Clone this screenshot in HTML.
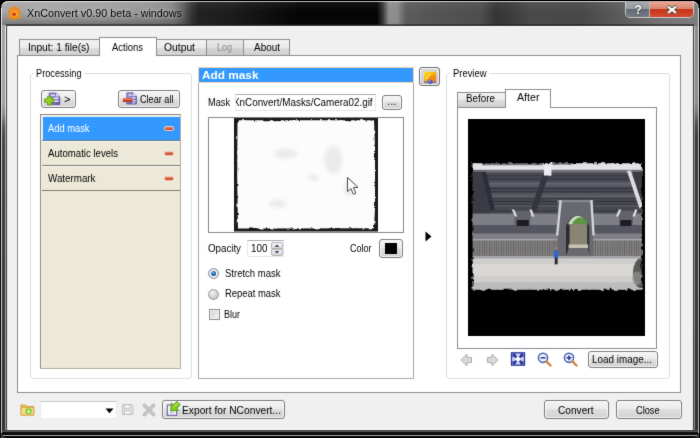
<!DOCTYPE html>
<html><head><meta charset="utf-8"><title>XnConvert v0.90 beta - windows</title>
<style>
html,body{margin:0;padding:0;background:#000;}
body{width:700px;height:438px;position:relative;overflow:hidden;font-family:"Liberation Sans",sans-serif;font-size:10.5px;color:#000;}
.a{position:absolute;box-sizing:border-box;}
.t{position:absolute;white-space:nowrap;line-height:14px;font-size:10.5px;transform-origin:0 50%;color:#000;}
.btn{position:absolute;box-sizing:border-box;border:1px solid #7c7c7c;border-radius:3px;background:linear-gradient(#f4f4f4 0%,#ececec 45%,#dedede 50%,#d2d2d2 100%);box-shadow:inset 0 0 0 1px rgba(255,255,255,.75);}
.tab{position:absolute;box-sizing:border-box;border:1px solid #898c95;border-bottom:none;background:linear-gradient(#f3f3f3 0%,#ebebeb 50%,#dddddd 52%,#d0d0d0 100%);}
.tab.sel{background:#fff;}
.grp{position:absolute;box-sizing:border-box;border:1px solid #d5dfe5;border-radius:3px;}
.li{position:absolute;left:1px;width:138px;height:25px;box-sizing:border-box;border-top:1px solid #fbfaf5;border-bottom:1px solid #7f7d74;background:#ece9d8;}
.minus{position:absolute;left:122px;top:9px;width:10px;height:5px;box-sizing:border-box;border:1px solid #f0c9b8;border-radius:2px;background:linear-gradient(#e8836a,#c8391f);}
#w{position:absolute;left:0;top:0;width:700px;height:438px;overflow:hidden;filter:url(#gsoft);}
</style></head><body><svg width="0" height="0" style="position:absolute"><filter id="gsoft" x="0" y="0" width="100%" height="100%" color-interpolation-filters="sRGB"><feConvolveMatrix order="3" kernelMatrix="1 4 1 4 40 4 1 4 1" divisor="60" edgeMode="duplicate" preserveAlpha="true"/></filter></svg><div id="w">

<!-- ===== window frame ===== -->
<div class="a" id="titlebar" style="left:1px;top:1px;width:698px;height:30px;border-radius:7px 7px 0 0;background:linear-gradient(90deg,#a8a8a8 0px,#a6a6a6 40px,#a0a0a0 100px,#969696 150px,#888 170px,#606060 182px,#383838 190px,#222 198px,#1c1c1c 230px,#0e0e0e 270px,#050505 300px,#050505 376px,#3a3a3a 382px,#8e8e8e 388px,#8c8c8c 396px,#5c5c5c 405px,#555 430px,#4e4e4e 480px,#353535 495px,#3c3c3c 510px,#4a4a4a 530px,#484848 580px,#5c5c5c 620px,#747474 660px,#7e7e7e 699px);"></div>
<div class="a" style="left:1px;top:1px;width:698px;height:24px;border-radius:7px 7px 0 0;background:linear-gradient(rgba(255,255,255,.06) 0,rgba(255,255,255,.0) 10px);border-top:1px solid rgba(255,255,255,.75);"></div>
<div class="a" style="left:2px;top:2px;width:200px;height:23px;background:linear-gradient(rgba(0,0,0,0) 9px,rgba(0,0,0,.10) 15px,rgba(0,0,0,.28) 23px);-webkit-mask-image:linear-gradient(90deg,#000 0,#000 165px,transparent 198px);mask-image:linear-gradient(90deg,#000 0,#000 165px,transparent 198px);"></div>
<!-- left frame -->
<div class="a" style="left:0;top:26px;width:7px;height:412px;background:linear-gradient(#a4a4a4 0px,#a0a0a0 76px,#8a8a8a 88px,#585858 100px,#474747 112px,#424250 126px,#424242 140px,#3c3c3c 300px,#333 400px);"></div>
<div class="a" style="left:0;top:8px;width:1px;height:430px;background:#0a0a0a;"></div>
<div class="a" style="left:1px;top:8px;width:1px;height:425px;background:linear-gradient(#f4f4f4,#d0d0d0 200px,#c4c4c4);"></div>
<div class="a" style="left:5px;top:26px;width:1px;height:405px;background:linear-gradient(#f0f0f0 0,#e8e8e8 80px,#a8a8a8 108px,#999 405px);"></div>
<div class="a" style="left:6px;top:25px;width:1px;height:406px;background:#454545;"></div>
<!-- right frame -->
<div class="a" style="left:693px;top:26px;width:7px;height:412px;background:linear-gradient(#8c8c8c 0px,#8e8e8e 74px,#7a7a7a 86px,#505050 98px,#3e3e3e 110px,#3a3a3a 300px,#333 400px);"></div>
<div class="a" style="left:693px;top:25px;width:1px;height:406px;background:#444;"></div>
<div class="a" style="left:694px;top:26px;width:1px;height:405px;background:linear-gradient(#c4c4c4 0,#bcbcbc 75px,#8c8c8c 105px,#888 405px);"></div>
<div class="a" style="left:698px;top:8px;width:1px;height:425px;background:linear-gradient(#e4e4e4 0,#dcdcdc 95px,#bdbdbd 125px,#b8b8b8);"></div>
<div class="a" style="left:699px;top:8px;width:1px;height:430px;background:#080808;"></div>
<!-- bottom frame -->
<div class="a" style="left:2px;top:430px;width:696px;height:8px;background:linear-gradient(#3a3a3a 0,#555 1.5px,#111 2.5px,#050505 5px,#a8a8a8 5px,#a8a8a8 6px,#060606 6px);border-radius:0 0 5px 5px;"></div>
<!-- title bottom lines -->
<div class="a" style="left:6px;top:24px;width:688px;height:1px;background:rgba(30,30,30,.55);"></div><div class="a" style="left:6px;top:25px;width:688px;height:1px;background:#3a3a3a;"></div>

<!-- client -->
<div class="a" style="left:7px;top:26px;width:686px;height:404px;background:#f0f0f0;border:1px solid #fbfbfb;border-color:#fdfdfd #e4e4e4 #fdfdfd #e4e4e4;"></div>

<!-- title icon -->
<svg class="a" style="left:7px;top:5.5px" width="15" height="14.5" viewBox="0 0 16 16" preserveAspectRatio="none">
 <g fill="#f08a1c"><circle cx="8" cy="9" r="5.6"/><circle cx="2.6" cy="6" r="1.7"/><circle cx="4.6" cy="2.8" r="1.7"/><circle cx="8" cy="1.8" r="1.7"/><circle cx="11.4" cy="2.8" r="1.7"/><circle cx="13.4" cy="6" r="1.7"/><circle cx="3" cy="12.5" r="1.8"/><circle cx="13" cy="12.5" r="1.8"/><circle cx="8" cy="14.3" r="1.7"/></g>
 <circle cx="8" cy="8.6" r="3.6" fill="#f6a531"/><circle cx="7.6" cy="9" r="1.9" fill="#d6301a"/>
</svg>
<span class="t" style="left:26.5px;top:6.26px;transform:scaleX(0.9787);font-size:11px;color:#000;text-shadow:0 0 6px rgba(255,255,255,.55),0 0 3px rgba(255,255,255,.35);">XnConvert v0.90 beta - windows</span>

<!-- caption buttons -->
<div class="a" style="left:625px;top:1px;width:69px;height:17px;border:1px solid #c9c9c9;border-top:none;border-radius:0 0 5px 5px;overflow:hidden;background:#555;">
  <div class="a" style="left:0;top:0;width:24px;height:16px;background:linear-gradient(#a9acb2 0,#979ba2 48%,#646a73 52%,#747b85 100%);border-right:1px solid #b9b9b9;"></div>
  <div class="a" style="left:24px;top:0;width:44px;height:16px;background:linear-gradient(#e6ab9b 0,#d98772 48%,#c5331a 52%,#d44c30 100%);"></div>
</div>
<div class="t" style="left:634.500px;top:2.500px;font-size:12px;font-weight:bold;color:#fff;text-shadow:0 0 2px #222;">?</div>
<svg class="a" style="left:666px;top:4.5px" width="12" height="9.5" viewBox="0 0 14 11"><path d="M2 1.5 L12 9.5 M12 1.5 L2 9.5" stroke="#444" stroke-width="4.2" stroke-linecap="butt"/><path d="M2.3 1.8 L11.7 9.2 M11.7 1.8 L2.3 9.2" stroke="#fff" stroke-width="2.6"/></svg>

<!-- ===== tab widget ===== -->
<div class="a" style="left:17px;top:55px;width:664px;height:338px;border:1px solid #898c95;background:#fff;"></div>
<div class="tab" style="left:19px;top:39.400px;width:81px;height:15.600px;"></div>
<div class="tab" style="left:156px;top:39.400px;width:51px;height:15.600px;"></div>
<div class="tab" style="left:206px;top:39.400px;width:38px;height:15.600px;background:linear-gradient(#e9e9e9 0,#dedede 50%,#d2d2d2 52%,#c9c9c9 100%);"></div>
<div class="tab" style="left:243px;top:39.400px;width:47px;height:15.600px;"></div>
<div class="tab sel" style="left:99.400px;top:37px;width:57.200px;height:19px;"></div>
<span class="t" style="left:27.5px;top:39.93px;transform:scaleX(0.9666);">Input: 1 file(s)</span>
<span class="t" style="left:111.5px;top:39.63px;transform:scaleX(0.9002);">Actions</span>
<span class="t" style="left:164px;top:39.93px;transform:scaleX(0.9832);">Output</span>
<span class="t" style="left:216.5px;top:39.93px;transform:scaleX(0.8556);color:#8c8c8c;">Log</span>
<span class="t" style="left:253.5px;top:39.93px;transform:scaleX(0.9471);">About</span>

<!-- ===== Processing group ===== -->
<div class="grp" style="left:29.500px;top:72.500px;width:162.500px;height:306px;"></div>
<div class="a" style="left:34px;top:70px;width:50px;height:8px;background:#fff;"></div>
<span class="t" style="left:36px;top:65.83px;transform:scaleX(0.8758);">Processing</span>
<div class="btn" style="left:41px;top:90px;width:35px;height:18px;"></div>
<svg class="a" style="left:44px;top:92px" width="18" height="14" viewBox="0 0 18 14">
 <defs><linearGradient id="docg" x1="0" y1="0" x2="1" y2="1"><stop offset="0" stop-color="#a9a2dc"/><stop offset="1" stop-color="#5d52a6"/></linearGradient></defs>
 <path d="M5.200 1 h7 l3.600 3.400 v8.200 h-10.600 z" fill="url(#docg)" stroke="#5a4f9c" stroke-width=".8"/>
 <path d="M12.200 1 v3.400 h3.600z" fill="#e4e1f6"/>
 <rect x="9.500" y="5.600" width="5" height="1.500" fill="#f1effb"/><rect x="9.500" y="8.400" width="5" height="1.500" fill="#f1effb"/><rect x="7" y="2.600" width="4" height="1.300" fill="#e6e3f7"/>
 <path d="M3.600 4.300 h3.400 v2.700 h2.900 v3.300 h-2.900 v2.700 h-3.400 v-2.700 h-2.900 v-3.300 h2.900 z" fill="#96d424" stroke="#5e9c14" stroke-width=".9"/>
</svg>
<span class="t" style="left:63.5px;top:91.66px;transform:scaleX(1.0097);font-size:11px;">&gt;</span>
<div class="btn" style="left:118px;top:90px;width:62px;height:18px;"></div>
<svg class="a" style="left:122px;top:92px" width="18" height="14" viewBox="0 0 18 14">
 <path d="M4.800 .8 h6.200 l3.400 3.200 v8 h-9.600 z" fill="url(#docg)" stroke="#5a4f9c" stroke-width=".8"/>
 <path d="M11 .8 v3.200 h3.400z" fill="#e4e1f6"/>
 <rect x="6.500" y="2.400" width="3.600" height="1.300" fill="#e6e3f7"/><rect x="10" y="5.200" width="3.600" height="1.300" fill="#f1effb"/><rect x="10.600" y="8" width="3" height="1.300" fill="#f1effb"/><rect x="10" y="10.300" width="3.600" height="1.100" fill="#d9d5f2"/>
 <rect x=".8" y="6.300" width="9.600" height="3.800" rx=".8" fill="#c7361c"/><rect x="1.200" y="6.500" width="8.800" height="1.300" fill="#ee8f6a"/>
</svg>
<span class="t" style="left:140px;top:91.83px;transform:scaleX(0.8698);">Clear all</span>
<!-- list -->
<div class="a" style="left:40px;top:114px;width:141px;height:255px;border:1px solid #828790;border-color:#8f8a7e #b5b1a4 #b5b1a4 #8f8a7e;background:#ece9d8;box-shadow:inset 1px 1px 0 #f6efe4;">
  <div class="li" style="top:1px;background:#3399ff;border-top-color:#e7f0fa;border-bottom-color:#6a7a8c;box-shadow:inset 1px 0 0 #e7f0fa;"><div class="minus"></div></div>
  <div class="li" style="top:26px;"><div class="minus"></div></div>
  <div class="li" style="top:51px;"><div class="minus"></div></div>
</div>
<span class="t" style="left:47.5px;top:120.93px;transform:scaleX(0.8889);color:#fff;">Add mask</span>
<span class="t" style="left:47.5px;top:146.13px;transform:scaleX(0.9156);">Automatic levels</span>
<span class="t" style="left:47.5px;top:171.23px;transform:scaleX(0.9322);">Watermark</span>

<!-- ===== centre panel ===== -->
<div class="a" style="left:198px;top:82px;width:215.500px;height:297px;border:1px solid #a9a9a9;border-top:none;background:#fff;"></div>
<div class="a" style="left:198px;top:67px;width:215.500px;height:16px;border:1px solid #f3d2b4;background:#3399ff;"></div>
<span class="t" style="left:201.5px;top:67.50px;transform:scaleX(1.0279);font-size:11.5px;font-weight:bold;color:#fff;">Add mask</span>
<span class="t" style="left:208px;top:94.83px;transform:scaleX(0.8767);">Mask</span>
<div class="a" style="left:235px;top:94px;width:141px;height:17px;border:1px solid #e3e9ef;border-top-color:#abadb3;background:#fff;overflow:hidden;">
 <span class="t" style="left:-2.9px;top:0.13px;transform:scaleX(0.9381);">XnConvert/Masks/Camera02.gif</span>
</div>
<div class="btn" style="left:382px;top:95px;width:20px;height:15px;"></div>
<span class="t" style="left:387px;top:94.33px;transform:scaleX(1.0838);color:#333;">...</span>
<!-- mask preview -->
<div class="a" style="left:208px;top:117px;width:195.500px;height:115.500px;border:1px solid #828790;background:#fff;overflow:hidden;">
<svg class="a" style="left:25px;top:0" width="144" height="113.500" viewBox="0 0 145 114" preserveAspectRatio="none">
 <defs>
  <filter id="rough" x="-5%" y="-5%" width="110%" height="110%"><feTurbulence type="fractalNoise" baseFrequency="0.2" numOctaves="3" seed="4" result="n"/><feDisplacementMap in="SourceGraphic" in2="n" scale="3.5"/><feGaussianBlur stdDeviation=".45"/></filter>
  <filter id="soft"><feGaussianBlur stdDeviation="2.2"/></filter>
 </defs>
 <rect x="0" y="0" width="145" height="114" fill="#1a1a1a"/>
 <path d="M3.500 2.200 L141 2.200 L142 30 L142 90 L141 110.800 L4 111 L3.200 60 Z" fill="#fcfcfc" filter="url(#rough)"/>
 <g filter="url(#soft)" fill="#dcdcdc" opacity=".55">
  <ellipse cx="100" cy="42" rx="9" ry="14"/><ellipse cx="52" cy="36" rx="12" ry="5"/><ellipse cx="44" cy="86" rx="9" ry="4"/><ellipse cx="116" cy="70" rx="5" ry="9"/><ellipse cx="80" cy="60" rx="6" ry="3"/>
 </g>
</svg>
</div>
<!-- cursor -->
<svg class="a" style="left:346px;top:176px" width="14" height="20" viewBox="0 0 14 20"><path d="M1.5 1.5 L1.5 15.6 L4.9 12.5 L7.4 18.3 L9.9 17.2 L7.4 11.6 L12 11.4 Z" fill="#fdfdff" stroke="#4a4a4a" stroke-width="1" stroke-linejoin="miter"/></svg>

<span class="t" style="left:208px;top:241.33px;transform:scaleX(0.9267);">Opacity</span>
<div class="a" style="left:247px;top:240px;width:37px;height:17px;border:1px solid #e3e9ef;border-top-color:#abadb3;background:#fff;"></div>
<span class="t" style="left:251px;top:241.33px;transform:scaleX(0.9412);">100</span>
<div class="a" style="left:271px;top:242px;width:12px;height:7px;border:1px solid #b5b5b5;border-radius:2px 2px 0 0;background:linear-gradient(#f6f6f6,#dcdcdc);"></div>
<div class="a" style="left:271px;top:249px;width:12px;height:7px;border:1px solid #b5b5b5;border-radius:0 0 2px 2px;background:linear-gradient(#f2f2f2,#d6d6d6);"></div>
<svg class="a" style="left:271px;top:242px" width="12" height="14" viewBox="0 0 12 14"><path d="M3.6 5 L6 2.4 L8.4 5 Z M3.6 9 L6 11.6 L8.4 9 Z" fill="#3c4a78"/></svg>
<span class="t" style="left:350px;top:241.33px;transform:scaleX(0.8568);">Color</span>
<div class="btn" style="left:379px;top:239px;width:24px;height:19px;"></div>
<div class="a" style="left:385px;top:243px;width:12px;height:11px;background:#000;"></div>

<!-- radios -->
<div class="a" style="left:208px;top:268px;width:11px;height:11px;border:1px solid #868b93;border-radius:50%;background:radial-gradient(circle at 50% 50%,#e4e8ee 0,#eceff3 55%,#c2c8d0 100%);"></div>
<div class="a" style="left:211px;top:271px;width:5px;height:5px;border-radius:50%;background:radial-gradient(circle at 40% 35%,#6cc0ea 0,#1a62a8 50%,#0b3268 100%);"></div>
<span class="t" style="left:225px;top:265.73px;transform:scaleX(0.9057);">Stretch mask</span>
<div class="a" style="left:208px;top:288.500px;width:11px;height:11px;border:1px solid #969696;border-radius:50%;background:radial-gradient(circle at 38% 32%,#f2f2f2 0,#d6d6d6 50%,#b4b4b4 100%);"></div>
<span class="t" style="left:225px;top:286.43px;transform:scaleX(0.8970);">Repeat mask</span>
<div class="a" style="left:208.500px;top:308.500px;width:11.500px;height:11.500px;border:1px solid #8e8f8f;background:linear-gradient(135deg,#cfcfcf,#f4f4f4);box-shadow:inset 0 0 0 1px #f0f0f0;"></div>
<span class="t" style="left:224.3px;top:307.13px;transform:scaleX(0.8562);">Blur</span>

<!-- splitter arrow & toggle -->
<svg class="a" style="left:425px;top:231px" width="7" height="11" viewBox="0 0 7 11"><path d="M0.5 0.5 L6.5 5.5 L0.5 10.5 Z" fill="#000"/></svg>
<div class="btn" style="left:419px;top:67px;width:21px;height:19px;border-color:#6e6e6e;background:linear-gradient(#dcdcdc,#c4c4c4);"></div>
<svg class="a" style="left:422px;top:69px" width="16" height="16" viewBox="0 0 16 16">
 <defs><linearGradient id="picg" x1="0" y1="0" x2="1" y2="1"><stop offset="0" stop-color="#ffe21a"/><stop offset=".45" stop-color="#f9b412"/><stop offset="1" stop-color="#e8700e"/></linearGradient></defs>
 <rect x="1.200" y="1.800" width="13.600" height="11.400" fill="#d9d5f0"/>
 <rect x="2" y="2.700" width="12.200" height="9.500" fill="url(#picg)"/>
 <path d="M5 12.200 L9.500 5.500 L11 7.500 L12.500 6 L14.200 9 V12.200Z" fill="#f28a14" opacity=".8"/>
 <path d="M3 9.500 L8 4.200 L9.200 5.200 L4 10.800Z" fill="#ffe86a" opacity=".7"/>
 <rect x="2" y="12.600" width="12.200" height="1" fill="#3c3c50"/>
 <circle cx="8.300" cy="12.700" r="2.300" fill="#5b52b8"/><circle cx="7.800" cy="12.100" r=".9" fill="#a9a4e4"/>
</svg>

<!-- ===== Preview group ===== -->
<div class="grp" style="left:446px;top:72.500px;width:224px;height:306px;"></div>
<div class="a" style="left:450px;top:70px;width:39px;height:8px;background:#fff;"></div>
<span class="t" style="left:452.5px;top:65.83px;transform:scaleX(0.8967);">Preview</span>
<div class="a" style="left:456.500px;top:107px;width:200.500px;height:241.500px;border:1px solid #898c95;background:#fff;"></div>
<div class="tab" style="left:457px;top:91.500px;width:49px;height:15.500px;"></div>
<div class="tab sel" style="left:505px;top:89px;width:46px;height:19px;"></div>
<span class="t" style="left:466px;top:91.23px;transform:scaleX(0.9374);">Before</span>
<span class="t" style="left:516.5px;top:90.43px;transform:scaleX(1.0141);">After</span>

<!-- preview image -->
<svg class="a" style="left:468px;top:119px" width="177" height="217" viewBox="0 0 176 218" preserveAspectRatio="none">
 <defs>
  <filter id="pb" x="-2%" y="-2%" width="104%" height="104%"><feGaussianBlur stdDeviation=".55"/></filter>
  <filter id="rough2" x="-5%" y="-8%" width="110%" height="116%"><feTurbulence type="fractalNoise" baseFrequency="0.22" numOctaves="3" seed="9" result="n"/><feDisplacementMap in="SourceGraphic" in2="n" scale="5"/><feGaussianBlur stdDeviation=".5"/></filter>
  <clipPath id="ph"><rect x="2" y="42" width="172" height="132"/></clipPath>
  <linearGradient id="seat" x1="0" y1="0" x2="0" y2="1"><stop offset="0" stop-color="#50505a"/><stop offset="1" stop-color="#3f3f48"/></linearGradient>
  <pattern id="rows" width="4" height="3.2" patternUnits="userSpaceOnUse"><rect width="4" height="3.2" fill="#4a4a54"/><rect y="2.2" width="4" height="1" fill="#2e2e36"/></pattern>
  <pattern id="planks" width="2.4" height="6" patternUnits="userSpaceOnUse"><rect width="2.4" height="6" fill="#807e7e"/><rect x="1.6" width=".8" height="6" fill="#666468"/></pattern>
 </defs>
 <rect width="176" height="218" fill="#000"/>
 <g clip-path="url(#ph)"><g filter="url(#pb)">
  <rect x="0" y="40" width="176" height="140" fill="#4b4b56"/>
  <!-- bright top rim / sky -->
  <rect x="0" y="42" width="176" height="10" fill="#e2e2e6"/><rect x="14" y="42" width="60" height="4.500" fill="#77777c"/><rect x="84" y="42" width="20" height="4" fill="#8a8a90"/>
  <rect x="0" y="51" width="176" height="3.500" fill="#70707a"/>
  <!-- seating -->
  <rect x="0" y="54" width="176" height="42" fill="url(#rows)"/>
  <rect x="0" y="63" width="176" height="5" fill="#686872" opacity=".75"/>
  <rect x="0" y="75" width="176" height="4" fill="#666670" opacity=".7"/>
  <rect x="0" y="86" width="176" height="3" fill="#5e5e68" opacity=".6"/>
  <path d="M0 53 L13 53 L22 95 L0 95Z" fill="#3a3a44"/>
  <path d="M13 53 L18 53 L27 92 L22 92Z" fill="#2f2f38"/>
  <path d="M176 53 L164 53 L174 95 L176 95Z" fill="#3a3a42"/>
  <path d="M158 52 L162 52 L174 88 L170.5 90Z" fill="#dcdce2"/>
  <rect x="75.5" y="47" width="7.5" height="10" fill="#ececf0"/>
  <path d="M74 57 L80 57 L68 92 L62 92 Z" fill="#353540"/>
  <!-- wall tiers -->
  <rect x="0" y="95" width="176" height="12" fill="#7e7e86"/>
  <rect x="0" y="106.5" width="176" height="8.5" fill="#565660"/>
  <rect x="0" y="115" width="176" height="6.5" fill="#7e7e86"/>
  <rect x="0" y="121.500" width="176" height="17" fill="url(#planks)"/>
  <rect x="0" y="120.500" width="176" height="1.500" fill="#a4a4aa"/>
  <!-- vomitoria boxes -->
  <rect x="46" y="92" width="16" height="15" fill="#62626c"/><rect x="48.500" y="101.500" width="12" height="6" fill="#1c1c22"/>
  <rect x="150" y="92" width="14" height="15" fill="#62626c"/><rect x="151.500" y="101.500" width="11" height="6" fill="#1c1c22"/>
  <path d="M43.500 91 L46 91 L49 98 L46.500 98Z" fill="#dadae0"/><path d="M61 91 L63.500 91 L66 98 L63.500 98Z" fill="#dadae0"/>
  <path d="M150 91 L152.500 91 L149.500 98 L147 98Z" fill="#dadae0"/><path d="M166 91 L168.500 91 L166 98 L163.500 98Z" fill="#dadae0"/>
  <!-- tower -->
  <rect x="89" y="81.500" width="35.500" height="57" fill="#686870"/>
  <rect x="89" y="81.500" width="35.500" height="2" fill="#8a8a92"/>
  <path d="M91 81.500 L93.300 81.500 L89.800 117 L87.500 117Z" fill="#d6d6dc"/><path d="M121.500 81.500 L123.800 81.500 L126 117 L123.700 117Z" fill="#d6d6dc"/>
  <path d="M97.500 138.500 L97.500 107 Q109 86 120.500 107 L120.500 138.500Z" fill="#2b2b30"/>
  <path d="M100 104 Q109 90 118.500 104 L118.500 106 L100 106Z" fill="#c8d8c0"/>
  <path d="M104 104 Q112 94 118.500 103 L118.500 107 L104 107Z" fill="#5f9445"/>
  <rect x="101" y="105.500" width="17.500" height="21" fill="#8a8474"/>
  <rect x="100" y="126" width="19.500" height="4" fill="#c6c2b4"/>
  <path d="M97 138.500 L121 138.500 L119.500 130 L100 130Z" fill="#6a6a6e"/>
  <!-- ground -->
  <rect x="0" y="138" width="176" height="42" fill="#cfcecd"/>
  <rect x="0" y="138" width="176" height="2" fill="#a2a2a6"/>
  <rect x="0" y="146" width="176" height="12" fill="#d8d7d6"/>
  <rect x="0" y="164" width="176" height="10" fill="#bcbcbe"/>
  <!-- person -->
  <rect x="85.500" y="131.500" width="4.200" height="8.500" rx="1" fill="#2f66cc"/><rect x="86.300" y="139.500" width="2.800" height="6.500" fill="#26262e"/><circle cx="87.600" cy="129.800" r="1.600" fill="#a87a62"/>
  <!-- bush -->
  <ellipse cx="172" cy="155" rx="8" ry="15" fill="#4a4c4a" opacity=".9"/>
  <ellipse cx="168" cy="160" rx="5" ry="7" fill="#9a9c9a" opacity=".6"/>
  <ellipse cx="174" cy="147" rx="3" ry="5" fill="#2a2c2a"/>
 </g></g>
 <path fill-rule="evenodd" d="M-10 -10 H186 V228 H-10Z M4.500 44.500 H173 V171.500 H4.500Z" fill="#000" filter="url(#rough2)"/>
</svg>

<!-- preview toolbar -->
<svg class="a" style="left:459px;top:351px" width="120" height="18" viewBox="0 0 120 18">
 <path d="M2 9 L8 3.2 L8 6.4 L12.5 6.4 L12.5 11.6 L8 11.6 L8 14.8 Z" fill="#d9d9d9" stroke="#a5a5a5" stroke-width=".9"/>
 <path d="M39 9 L33 3.2 L33 6.4 L28.5 6.4 L28.5 11.6 L33 11.6 L33 14.8 Z" fill="#d9d9d9" stroke="#a5a5a5" stroke-width=".9"/>
 <rect x="52.5" y="1.800" width="13" height="12.400" fill="#cfd4f4" stroke="#2c3a9c" stroke-width="1.300"/><rect x="57" y="6" width="4" height="4" fill="#fff"/>
 <path transform="translate(0,-.9)" d="M53.500 3.500 h4 l-1.200 1.200 l1.900 1.900 l-1.600 1.600 l-1.900 -1.900 l-1.200 1.200z M64.500 3.500 v4 l-1.200 -1.200 l-1.900 1.900 l-1.600 -1.600 l1.900 -1.900 l-1.200 -1.200z M53.500 14.500 v-4 l1.200 1.200 l1.900 -1.900 l1.600 1.600 l-1.900 1.900 l1.200 1.200z M64.500 14.500 h-4 l1.200 -1.200 l-1.900 -1.900 l1.600 -1.600 l1.900 1.900 l1.200 -1.200z" fill="#24309a"/>
 <g transform="translate(0,-.7)"><circle cx="84" cy="7.5" r="4.6" fill="#eef2fb" stroke="#4a5cb8" stroke-width="1.5"/><path d="M87.4 11 L91.5 15.2" stroke="#c98a3a" stroke-width="2.4" stroke-linecap="round"/><path d="M81.6 7.5 h4.8" stroke="#26338f" stroke-width="1.5"/>
 <circle cx="110" cy="7.5" r="4.6" fill="#eef2fb" stroke="#4a5cb8" stroke-width="1.5"/><path d="M113.4 11 L117.5 15.2" stroke="#c98a3a" stroke-width="2.4" stroke-linecap="round"/><path d="M107.6 7.5 h4.8 M110 5.1 v4.8" stroke="#26338f" stroke-width="1.5"/></g>
</svg>
<div class="btn" style="left:588px;top:351px;width:70px;height:16.500px;"></div>
<span class="t" style="left:592px;top:352.13px;transform:scaleX(0.9428);">Load image...</span>

<!-- ===== bottom bar ===== -->
<svg class="a" style="left:20px;top:403px" width="15" height="13" viewBox="0 0 15 13">
 <path d="M1 2 h4.600 l1.400 1.600 h6.800 v8.400 h-12.800z" fill="#edc052" stroke="#c99a34" stroke-width=".9"/>
 <path d="M1 4.600 h12.800 v7.400 h-12.800z" fill="#f7dc88" stroke="#cda040" stroke-width=".8"/>
 <circle cx="8.600" cy="8.200" r="3" fill="#6cc81e"/><path d="M8.600 6.300 v3 M7.100 8.200 L8.600 9.900 L10.100 8.200" stroke="#eaffd2" stroke-width="1.100" fill="none"/>
</svg>
<div class="a" style="left:39.500px;top:400.500px;width:77px;height:18px;border:1px solid #e9ecf0;border-top-color:#c4c6cc;background:#fff;"></div>
<svg class="a" style="left:105px;top:408px" width="9" height="6" viewBox="0 0 9 6"><path d="M0.5 0.5 h8 L4.5 5.2Z" fill="#000"/></svg>
<svg class="a" style="left:121px;top:403px" width="13" height="13" viewBox="0 0 13 13"><path d="M1.5 1.5 h9 l1.5 1.5 v8.5 h-10.5z" fill="#e4e4e4" stroke="#c2c2c2"/><rect x="3.5" y="1.8" width="5.5" height="3.4" fill="#f6f6f6" stroke="#b0b0b0" stroke-width=".6"/><rect x="3.5" y="7.5" width="6" height="3.8" fill="#f0f0f0" stroke="#b4b4b4" stroke-width=".6"/></svg>
<svg class="a" style="left:142px;top:403px" width="14" height="14" viewBox="0 0 14 14"><path d="M2.5 2.5 L11.5 11.5 M11.5 2.5 L2.5 11.5" stroke="#bcbcbc" stroke-width="3.800" stroke-linecap="round"/><path d="M2.8 2.8 L11.2 11.2 M11.2 2.8 L2.8 11.2" stroke="#c9c9c9" stroke-width="1.600" stroke-linecap="round"/></svg>
<div class="btn" style="left:162px;top:400px;width:123px;height:19px;"></div>
<svg class="a" style="left:165px;top:401px" width="16" height="16" viewBox="0 0 16 16">
 <rect x="2.300" y="4" width="9.400" height="10.300" fill="#f6f5fc" stroke="#5a4f9c" stroke-width="1"/>
 <rect x="4.500" y="11.300" width="5" height="1" fill="#b8b4d8"/>
 <g transform="translate(9.300,6.300) rotate(45)"><path d="M-2.300 -6 h4.600 v5 h2.800 L0 5.200 L-5.100 -1 h2.800z" fill="#86cc22" stroke="#4f9410" stroke-width=".9" stroke-linejoin="round"/><path d="M-1.300 -5.200 h1.600 v5 h-1.600z" fill="#b6e86a" opacity=".8"/></g>
</svg>
<span class="t" style="left:182px;top:402.53px;transform:scaleX(0.9749);">Export for NConvert...</span>
<div class="btn" style="left:544px;top:400px;width:65px;height:19px;"></div>
<span class="t" style="left:557.5px;top:402.53px;transform:scaleX(0.9656);">Convert</span>
<div class="btn" style="left:616px;top:400px;width:66px;height:19px;"></div>
<span class="t" style="left:635.5px;top:402.53px;transform:scaleX(0.8749);">Close</span>

</div></body></html>
